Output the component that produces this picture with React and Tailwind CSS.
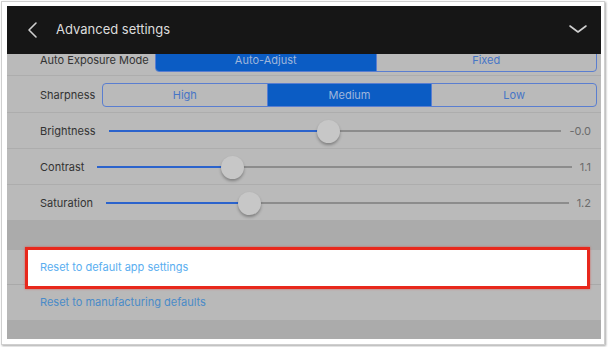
import React from 'react';

const sliders = [
  { label: 'Brightness', value: '-0.0', pos: 0.483 },
  { label: 'Contrast', value: '1.1', pos: 0.273 },
  { label: 'Saturation', value: '1.2', pos: 0.3 },
];

const Chevron = ({ d, className }) => (
  <svg className={className} viewBox="0 0 20 20" fill="none" stroke="currentColor" strokeWidth="1.6" strokeLinecap="round" strokeLinejoin="round">
    <path d={d} />
  </svg>
);

const Segmented = ({ options, selected }) => (
  <div className="flex flex-1 h-[24px] border border-[#5a7ed0] rounded-[4px] overflow-hidden">
    {options.map((opt, i) => (
      <div
        key={opt}
        className={
          'flex-1 flex items-center justify-center text-[11px] leading-[12px] ' +
          (i > 0 ? 'border-l border-[#5a7ed0] ' : '') +
          (i === selected ? 'bg-[#0b5cc4] text-[#9fb6db]' : 'text-[#4775c6]')
        }
      >
        {opt}
      </div>
    ))}
  </div>
);

const SliderRow = ({ label, value, pos }) => (
  <div className="flex items-center h-[36px] pl-[33px] pr-[10px] pt-[1px] border-b border-[#adadad]">
    <span className="text-[11px] text-[#333] mr-[13px]">{label}</span>
    <div className="relative flex-1 h-[2px] bg-[#8c8c8c]">
      <div className="absolute left-0 top-0 h-[2px] bg-[#2b63cc]" style={{ width: `${pos * 100}%` }} />
      <div
        className="absolute top-1/2 w-[23px] h-[23px] -mt-[11px] -ml-[11px] rounded-full bg-[#c7c7c7] shadow-[0_2px_3px_rgba(0,0,0,0.3)]"
        style={{ left: `calc(11px + (100% - 22px) * ${pos})` }}
      />
    </div>
    <span className="ml-[8px] text-[11px] text-[#6b6b6b] text-right">{value}</span>
  </div>
);

export default function App() {
  return (
    <div className="w-[608px] h-[347px] bg-white pt-[1px] pl-[1px]" style={{ fontFamily: 'Inter, "Liberation Sans", sans-serif' }}>
      <div className="w-[604px] h-[344px] border border-[#cfcfcf] shadow-[1px_1px_2px_rgba(0,0,0,0.35)] pl-[5px] pt-[4px]">
        <div className="w-[594px] h-[333px] flex flex-col bg-[#ababab] overflow-hidden">
          {/* Header */}
          <div className="h-[48px] shrink-0 bg-[#161616] flex items-center text-[#dcdcdc] relative z-10">
            <Chevron d="M13 3 L6 10 L13 17" className="w-[20px] h-[20px] ml-[16px] text-[#cfcfcf]" />
            <span className="ml-[13px] text-[13px]">Advanced settings</span>
            <Chevron d="M2 6 L10 12 L18 6" className="w-[20px] h-[20px] ml-auto mr-[13px] text-[#cfcfcf]" />
          </div>

          {/* Settings list */}
          <div className="h-[166px] shrink-0 overflow-hidden bg-[#bababa]">
            <div className="-mt-[10px]">
              <div className="flex items-center h-[32px] pl-[33px] pr-[4px] border-b border-[#adadad]">
                <span className="w-[115px] shrink-0 text-[11px] leading-[12px] text-[#333]">Auto Exposure Mode</span>
                <Segmented options={['Auto-Adjust', 'Fixed']} selected={0} />
              </div>
              <div className="flex items-center h-[37px] pl-[33px] pr-[4px] pt-[2px] border-b border-[#adadad]">
                <span className="w-[62px] shrink-0 text-[11px] text-[#333]">Sharpness</span>
                <Segmented options={['High', 'Medium', 'Low']} selected={1} />
              </div>
              {sliders.map((s) => (
                <SliderRow key={s.label} {...s} />
              ))}
            </div>
          </div>

          {/* Reset actions */}
          <div className="mt-[30px] bg-[#b9b9b9]">
            <div className="relative h-[35px] flex items-center pl-[33px] border-b border-[#a9a9a9]">
              <div className="absolute left-[18px] right-[11px] -top-[3px] -bottom-[5px] bg-white border-[3px] border-[#e8281c] shadow-[0_0_2px_rgba(232,40,28,0.6)]" />
              <span className="relative text-[11px] text-[#5aaef0]">Reset to default app settings</span>
            </div>
            <div className="h-[35px] flex items-center pl-[33px]">
              <span className="text-[11px] text-[#4a8bc8]">Reset to manufacturing defaults</span>
            </div>
          </div>
        </div>
      </div>
    </div>
  );
}
